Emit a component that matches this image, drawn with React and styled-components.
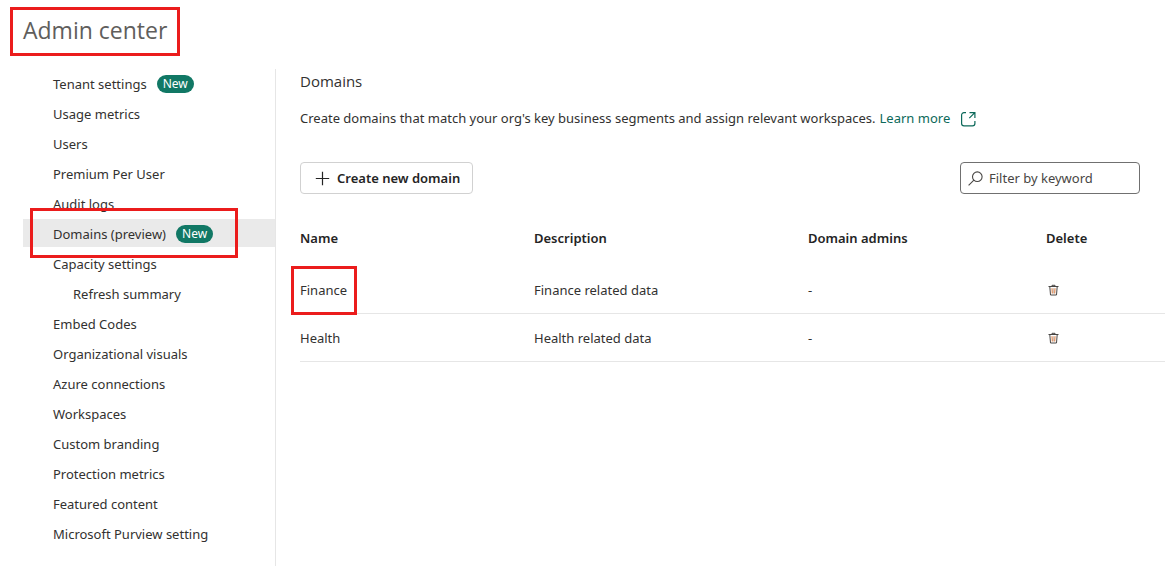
import React from "react";
import styled, { createGlobalStyle, css } from "styled-components";

const GlobalStyle = createGlobalStyle`
  *, *::before, *::after { box-sizing: border-box; }
  body {
    margin: 0;
    background: #fff;
    color: #323130;
    font-family: "Noto Sans", "Open Sans", sans-serif;
    font-size: 13px;
    line-height: 20px;
  }
`;

const highlight = css`
  border: 3px solid #eb1c1c;
`;

const Page = styled.div`
  min-height: 100vh;
  display: flex;
  flex-direction: column;
`;

const Header = styled.header`
  padding: 7px 10px 0;
  margin-bottom: 13px;
`;

const PageTitle = styled.h1`
  ${highlight}
  display: inline-block;
  vertical-align: top;
  min-width: 170px;
  margin: 0;
  padding: 4px 9px 7px 10px;
  font-family: "Open Sans", sans-serif;
  font-size: 23px;
  line-height: 32px;
  font-weight: 400;
  color: #605e5c;
`;

const Body = styled.div`
  flex: 1;
  display: flex;
`;

const Sidebar = styled.nav`
  flex: 0 0 253px;
  margin-left: 23px;
  border-right: 1px solid #e6e6e6;
`;

const NavList = styled.ul`
  list-style: none;
  margin: 0;
  padding: 0;
  display: flex;
  flex-direction: column;
  gap: 2px;
`;

const NavItem = styled.li`
  position: relative;
`;

const NavLink = styled.a`
  display: flex;
  align-items: center;
  gap: 10px;
  height: 28px;
  padding-top: 2px;
  padding-left: ${(p) => (p.$nested ? 50 : 30)}px;
  background: ${(p) => (p.$active ? "#eaeaea" : "transparent")};
  color: #323130;
  text-decoration: none;
`;

const Badge = styled.span`
  height: 18px;
  padding: 0 6px;
  border-radius: 9px;
  background: #117865;
  color: #fff;
  font-size: 12px;
  line-height: 18px;
`;

const NavHighlight = styled.span`
  ${highlight}
  position: absolute;
  z-index: 1;
  inset: -11px 37px -11px 7px;
  pointer-events: none;
`;

const Main = styled.main`
  flex: 1;
  min-width: 0;
  padding: 2px 0 24px 24px;
`;

const SectionTitle = styled.h2`
  margin: 0 0 17px;
  font-family: "Open Sans", sans-serif;
  font-size: 15px;
  line-height: 20px;
  font-weight: 500;
`;

const Intro = styled.p`
  display: flex;
  align-items: center;
  gap: 4px;
  margin: 0 0 34px;
`;

const LearnMore = styled.a`
  display: flex;
  align-items: center;
  gap: 10px;
  color: #0c695a;
  text-decoration: none;
`;

const Toolbar = styled.div`
  display: flex;
  justify-content: space-between;
  margin-right: 25px;
`;

const CreateButton = styled.button`
  display: flex;
  align-items: center;
  gap: 7px;
  height: 32px;
  padding: 0 12px 0 14px;
  border: 1px solid #d1d1d1;
  border-radius: 4px;
  background: #fff;
  color: #242424;
  font: inherit;
  font-weight: 600;
`;

const FilterBox = styled.label`
  display: flex;
  align-items: center;
  gap: 6px;
  width: 180px;
  height: 32px;
  padding: 0 7px;
  border: 1px solid #707070;
  border-radius: 4px;
  color: #484644;
`;

const FilterInput = styled.input`
  flex: 1;
  min-width: 0;
  padding: 0;
  border: 0;
  outline: 0;
  background: transparent;
  color: inherit;
  font: inherit;
  &::placeholder {
    color: #484644;
    opacity: 1;
  }
`;

const Table = styled.table`
  width: 100%;
  margin-top: 16px;
  border-collapse: separate;
  border-spacing: 0;
  table-layout: fixed;
`;

const Col = styled.col`
  width: ${(p) => p.$width};
`;

const HeadCell = styled.th`
  height: 56px;
  padding: 0 0 1px;
  vertical-align: middle;
  text-align: left;
  font-weight: 600;
  color: #242424;
`;

const Cell = styled.td`
  position: relative;
  height: 48px;
  padding: 0;
  border-bottom: 1px solid #e6e6e6;
`;

const CellHighlight = styled.span`
  ${highlight}
  position: absolute;
  top: 0;
  bottom: -2px;
  left: -9px;
  width: 66px;
  pointer-events: none;
`;

const DeleteButton = styled.button`
  display: flex;
  margin-left: 2px;
  padding: 0;
  border: 0;
  background: none;
  color: #484644;
`;

const PlusIcon = () => (
  <svg width="15" height="15" viewBox="0 0 15 15" fill="none" stroke="currentColor" strokeWidth="1.2" aria-hidden="true">
    <path d="M7.5 .8v13.4M.8 7.5h13.4" />
  </svg>
);

const SearchIcon = () => (
  <svg width="15" height="15" viewBox="0 0 15 15" fill="none" stroke="currentColor" strokeWidth="1.1" aria-hidden="true">
    <circle cx="9.3" cy="5.7" r="4.8" />
    <path d="M5.9 9.1.6 14.4" />
  </svg>
);

const OpenIcon = () => (
  <svg width="16" height="18" viewBox="0 -2 16 18" fill="none" stroke="currentColor" strokeWidth="1.2" aria-hidden="true">
    <path d="M6 1.6H4A2.4 2.4 0 0 0 1.6 4v8.5A2.4 2.4 0 0 0 4 14.900h8.500a2.400 2.400 0 0 0 2.400-2.400V10" />
    <path d="M9.500 1.600h5.400V7M14.800 1.700 9.300 7.200" />
  </svg>
);

const TrashIcon = () => (
  <svg width="11" height="12" viewBox="0 0 11 12" fill="none" aria-hidden="true">
    <path d="M.5 2.500h10M4 2.200V1.300h3v.9M1.800 2.700l.7 8.300h6l.7-8.300" stroke="#484644" />
    <path d="M4 4.200l.3 5.300M7 4.200l-.3 5.300" stroke="#d9773a" />
    <path d="M5.500 4.200v5.300" stroke="#b9a9a4" strokeWidth=".7" />
  </svg>
);

const navItems = [
  { label: "Tenant settings", isNew: true },
  { label: "Usage metrics" },
  { label: "Users" },
  { label: "Premium Per User" },
  { label: "Audit logs" },
  { label: "Domains (preview)", isNew: true, active: true },
  { label: "Capacity settings" },
  { label: "Refresh summary", nested: true },
  { label: "Embed Codes" },
  { label: "Organizational visuals" },
  { label: "Azure connections" },
  { label: "Workspaces" },
  { label: "Custom branding" },
  { label: "Protection metrics" },
  { label: "Featured content" },
  { label: "Microsoft Purview setting" },
];

const domains = [
  { name: "Finance", description: "Finance related data", admins: "-", highlighted: true },
  { name: "Health", description: "Health related data", admins: "-" },
];

export default function App() {
  return (
    <Page>
      <GlobalStyle />
      <Header>
        <PageTitle>Admin center</PageTitle>
      </Header>
      <Body>
        <Sidebar aria-label="Admin center">
          <NavList>
            {navItems.map(({ label, isNew, active, nested }) => (
              <NavItem key={label}>
                <NavLink href="#" $active={active} $nested={nested} aria-current={active ? "page" : undefined}>
                  {label}
                  {isNew && <Badge>New</Badge>}
                </NavLink>
                {active && <NavHighlight />}
              </NavItem>
            ))}
          </NavList>
        </Sidebar>
        <Main>
          <SectionTitle>Domains</SectionTitle>
          <Intro>
            Create domains that match your org's key business segments and assign relevant workspaces.
            <LearnMore href="#">
              Learn more
              <OpenIcon />
            </LearnMore>
          </Intro>
          <Toolbar>
            <CreateButton type="button">
              <PlusIcon />
              Create new domain
            </CreateButton>
            <FilterBox>
              <SearchIcon />
              <FilterInput type="text" placeholder="Filter by keyword" aria-label="Filter by keyword" />
            </FilterBox>
          </Toolbar>
          <Table>
            <colgroup>
              <Col $width="234px" />
              <Col $width="274px" />
              <Col $width="238px" />
              <Col />
            </colgroup>
            <thead>
              <tr>
                <HeadCell scope="col">Name</HeadCell>
                <HeadCell scope="col">Description</HeadCell>
                <HeadCell scope="col">Domain admins</HeadCell>
                <HeadCell scope="col">Delete</HeadCell>
              </tr>
            </thead>
            <tbody>
              {domains.map((d) => (
                <tr key={d.name}>
                  <Cell>
                    {d.name}
                    {d.highlighted && <CellHighlight />}
                  </Cell>
                  <Cell>{d.description}</Cell>
                  <Cell>{d.admins}</Cell>
                  <Cell>
                    <DeleteButton type="button" aria-label={`Delete ${d.name}`}>
                      <TrashIcon />
                    </DeleteButton>
                  </Cell>
                </tr>
              ))}
            </tbody>
          </Table>
        </Main>
      </Body>
    </Page>
  );
}
